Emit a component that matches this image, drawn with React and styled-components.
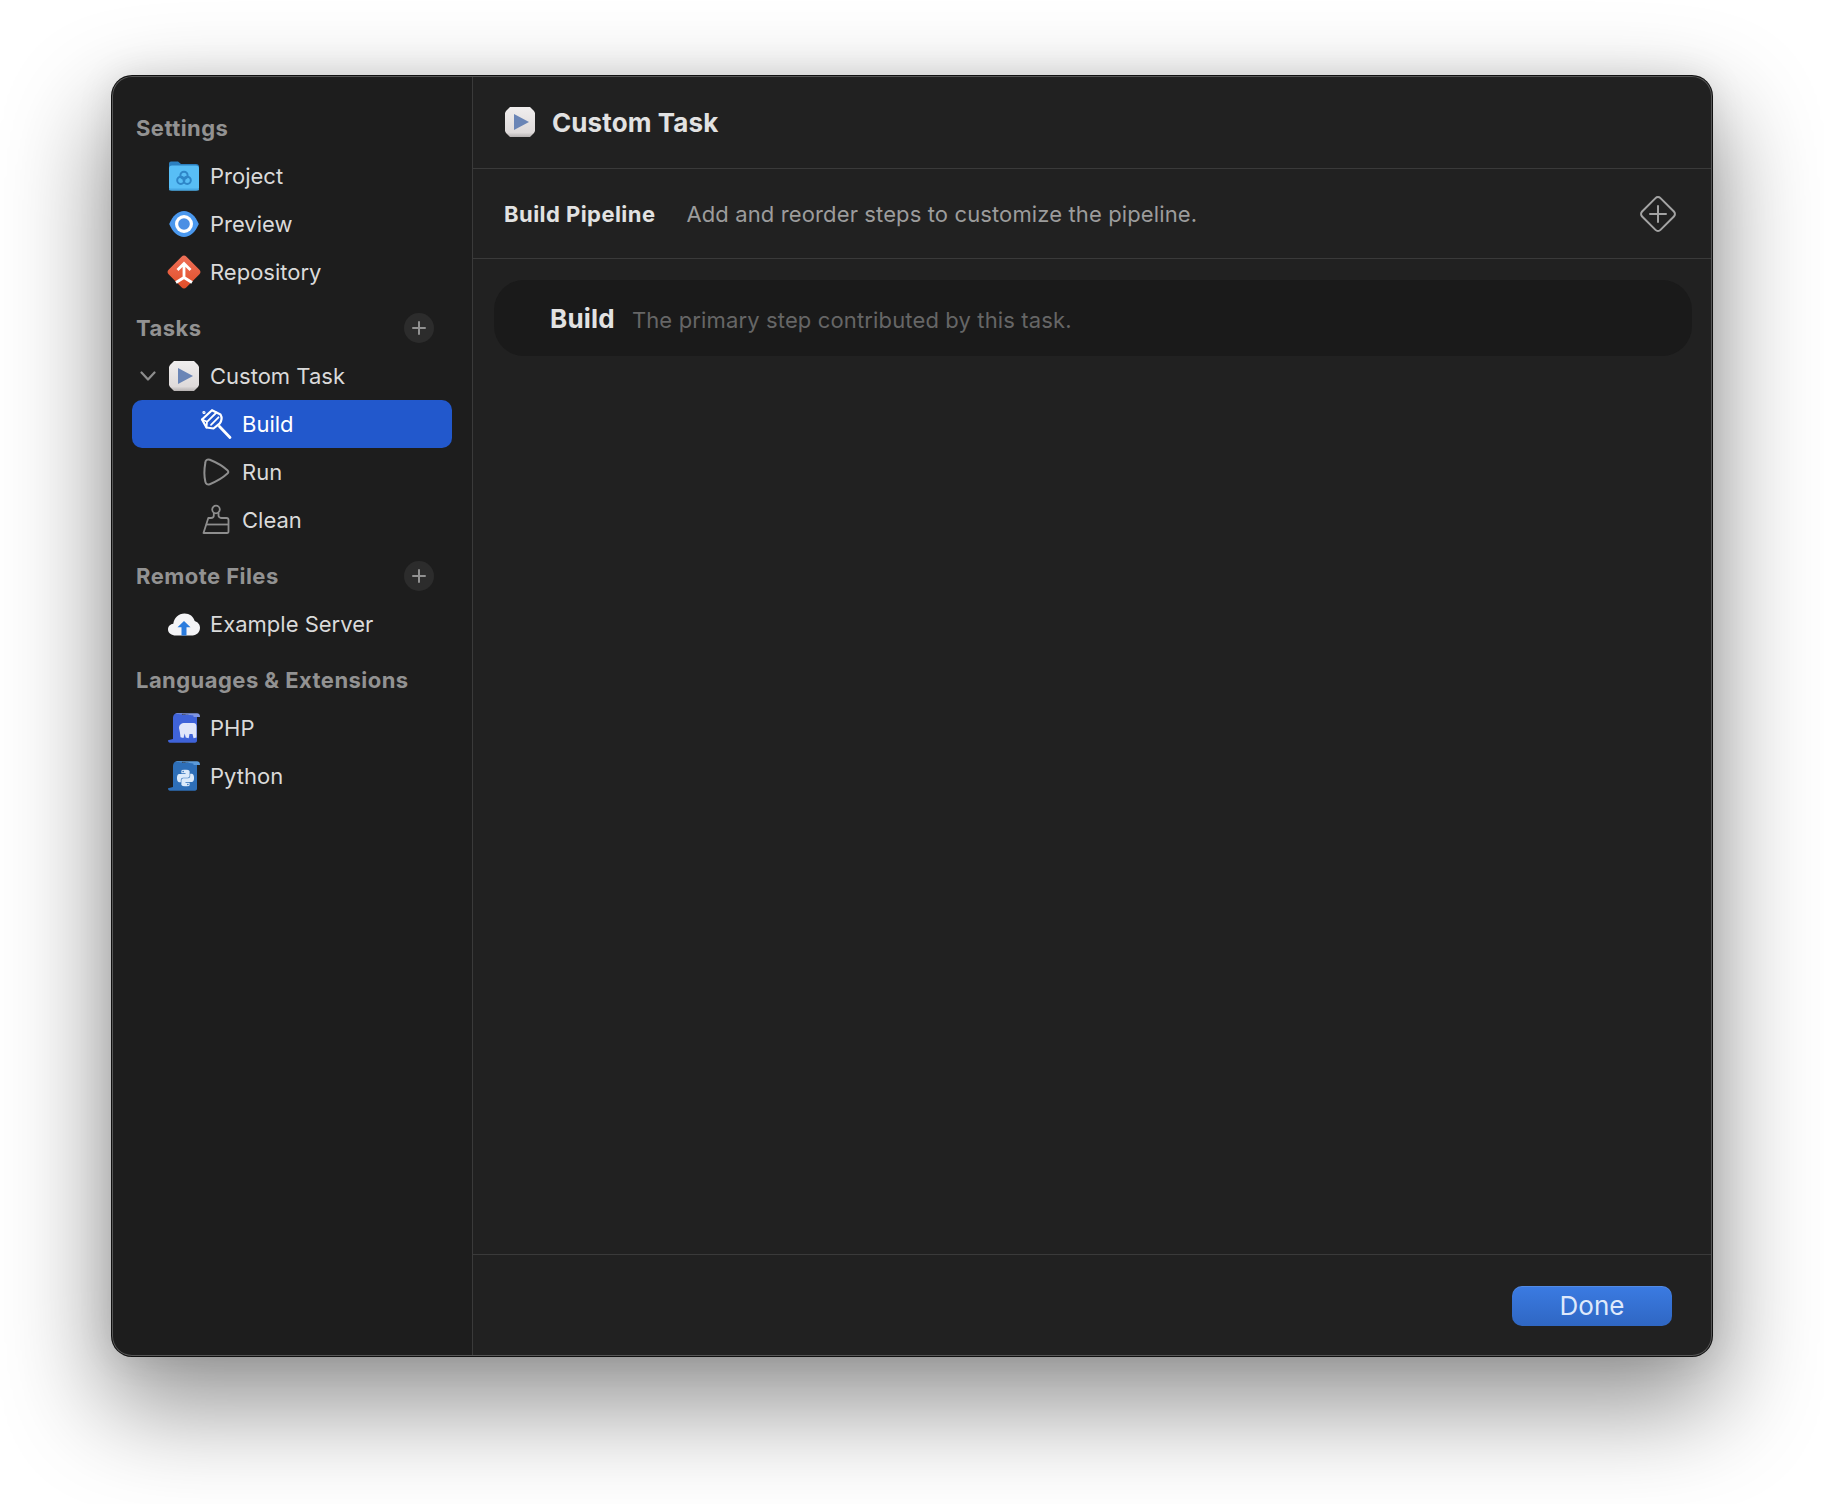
import React from "react";
import styled, { createGlobalStyle } from "styled-components";
import { SiPython } from "react-icons/si";

const Global = createGlobalStyle`
  html, body { margin: 0; padding: 0; background: #ffffff; }
  body { font-family: Inter, "Liberation Sans", sans-serif; -webkit-font-smoothing: antialiased; }
  #root { width: 1824px; height: 1504px; overflow: hidden; }
`;

const Stage = styled.div`
  width: 1824px;
  height: 1504px;
  padding: 76px 112px 148px;
  box-sizing: border-box;
`;
const Window = styled.div`
  width: 1600px;
  height: 1280px;
  display: flex;
  border-radius: 20px;
  overflow: hidden;
  background: #212121;
  box-shadow: 0 0 0 1px #111, 0 44px 100px 8px rgba(0, 0, 0, 0.42), 0 0 36px rgba(0, 0, 0, 0.1);
  position: relative;
  &::after {
    content: "";
    position: absolute;
    inset: 0;
    border-radius: 20px;
    box-shadow: inset 0 0 0 1px #565656;
    pointer-events: none;
  }
`;
const Sidebar = styled.aside`
  width: 361px;
  flex-shrink: 0;
  box-sizing: border-box;
  padding: 28px 20px 0;
  background: #1d1d1d;
  border-right: 1px solid #3a3a3a;
  display: flex;
  flex-direction: column;
  gap: 8px;
`;
const Section = styled.section`
  display: flex;
  flex-direction: column;
`;
const SectionHead = styled.div`
  height: 48px;
  display: flex;
  align-items: center;
  justify-content: space-between;
  padding: 0 18px 0 4px;
  font-size: 22px;
  font-weight: 700;
  color: #929292;
  letter-spacing: 0.45px;
`;
const AddCircle = styled.span`
  width: 30px;
  height: 30px;
  border-radius: 50%;
  background: #2c2c2c;
  color: #919191;
  display: flex;
  align-items: center;
  justify-content: center;
`;
const Row = styled.div`
  height: 48px;
  display: flex;
  align-items: center;
  gap: 11px;
  border-radius: 10px;
  padding-left: ${(p) => (p.$nested ? 69 : 37)}px;
  background: ${(p) => (p.$selected ? "#2258cc" : "transparent")};
  color: ${(p) => (p.$selected ? "#ffffff" : "#dadada")};
  font-size: 22px;
  font-weight: 400;
  position: relative;
`;
const Chevron = styled.svg`
  position: absolute;
  left: 8px;
  top: 18px;
  width: 16px;
  height: 12px;
`;
const IconSvg = styled.svg`
  width: 30px;
  height: 30px;
  flex-shrink: 0;
  overflow: visible;
`;
const Main = styled.main`
  flex: 1;
  min-width: 0;
  display: flex;
  flex-direction: column;
  background: #212121;
`;
const Header = styled.header`
  height: 93px;
  box-sizing: border-box;
  display: flex;
  align-items: center;
  gap: 17px;
  padding: 0 32px;
  border-bottom: 1px solid #3a3a3a;
`;
const Title = styled.h1`
  margin: 0;
  font-size: 26px;
  font-weight: 700;
  color: #e2e2e2;
  letter-spacing: 0.1px;
`;
const PipelineBar = styled.div`
  height: 90px;
  box-sizing: border-box;
  display: flex;
  align-items: center;
  padding: 0 34px 0 31px;
  border-bottom: 1px solid #3a3a3a;
`;
const PipelineTitle = styled.span`
  font-size: 22px;
  font-weight: 700;
  color: #e2e2e2;
  letter-spacing: 0.45px;
`;
const PipelineDesc = styled.span`
  margin-left: 31px;
  font-size: 22px;
  color: #9c9c9c;
  letter-spacing: 0.12px;
  flex: 1;
`;
const StepList = styled.div`
  flex: 1;
  padding: 21px 20px 0 21px;
`;
const StepCard = styled.div`
  height: 76px;
  display: flex;
  align-items: center;
  gap: 17px;
  padding-left: 56px;
  border-radius: 30px;
  background: #1a1a1a;
`;
const StepName = styled.span`
  font-size: 26px;
  font-weight: 700;
  color: #e2e2e2;
  letter-spacing: 0.2px;
`;
const StepDesc = styled.span`
  margin-top: 3px;
  font-size: 22px;
  color: #666666;
  letter-spacing: 0.14px;
`;
const Footer = styled.footer`
  height: 102px;
  box-sizing: border-box;
  border-top: 1px solid #3a3a3a;
  display: flex;
  align-items: center;
  justify-content: flex-end;
  padding-right: 40px;
`;
const DoneButton = styled.button`
  width: 160px;
  height: 40px;
  border: 0;
  border-radius: 10px;
  background: linear-gradient(#3b7be2, #2f67c3);
  box-shadow: inset 0 1px 0 rgba(255, 255, 255, 0.12);
  color: #dfe9fb;
  font: 400 26px Inter, "Liberation Sans", sans-serif;
  padding: 0;
`;

const Plus = () => (
  <svg width="14" height="14" viewBox="0 0 14 14">
    <path d="M7 1v12M1 7h12" stroke="currentColor" strokeWidth="2" strokeLinecap="round" />
  </svg>
);

const FolderIcon = () => (
  <IconSvg viewBox="0 0 30 30">
    <path d="M0 5V2.500A2 2 0 0 1 2 .5h7l3 2.500h15a3 3 0 0 1 3 3V9H0z" fill="#2b7fbf" />
    <rect x="0" y="4.500" width="30" height="25" rx="3" fill="#58bef6" />
    <rect x="0" y="27.500" width="30" height="2.100" rx="1" fill="#47a8e4" />
    <g fill="none" stroke="#2e86c8" strokeWidth="2">
      <circle cx="15" cy="14.300" r="3.600" />
      <circle cx="11.800" cy="19.300" r="3.600" />
      <circle cx="18.200" cy="19.300" r="3.600" />
    </g>
  </IconSvg>
);
const EyeIcon = () => (
  <IconSvg viewBox="0 0 30 30">
    <path d="M.2 15C3.500 7 9 2 15 2s11.500 5 14.800 13C26.500 23 21 28 15 28S3.500 23 .2 15z" fill="#4a98ee" />
    <circle cx="15" cy="15" r="9" fill="#fff" />
    <circle cx="15" cy="15" r="5.800" fill="#4a8fe4" />
  </IconSvg>
);
const RepoIcon = () => (
  <IconSvg viewBox="0 0 30 30">
    <defs>
      <linearGradient id="repoG" x1="0" y1="0" x2="0" y2="1">
        <stop offset="0" stopColor="#ee7058" />
        <stop offset="1" stopColor="#e24e28" />
      </linearGradient>
    </defs>
    <path d="M12.500-.2a3.500 3.500 0 0 1 5 0L30.200 12.500a3.500 3.500 0 0 1 0 5L17.500 30.200a3.500 3.500 0 0 1-5 0L-.2 17.500a3.500 3.500 0 0 1 0-5z" fill="url(#repoG)" />
    <path d="M15 6.500V21M8.500 13 15 6.500l6.500 6.500M7 25.500 15 20.500l8 5" fill="none" stroke="#fff" strokeWidth="2.800" />
  </IconSvg>
);
const TaskIcon = ({ id }) => (
  <IconSvg viewBox="0 0 30 30">
    <defs>
      <linearGradient id={id} x1="0" y1="0" x2="0" y2="1">
        <stop offset="0" stopColor="#f0eeee" />
        <stop offset="0.85" stopColor="#dedada" />
        <stop offset="1" stopColor="#b5b1b1" />
      </linearGradient>
    </defs>
    <path d="M5 0h20l1 1 3 3 1 2v18l-1 2-3 3-1 1H5l-1-1-3-3-1-2V6l1-2 3-3z" fill={`url(#${id})`} />
    <path d="M9 7v16l15-8z" fill="#6a85b6" />
  </IconSvg>
);
const HammerIcon = () => (
  <IconSvg viewBox="0 0 30 30" fill="none" stroke="#fff" strokeWidth="2.200" strokeLinejoin="round" strokeLinecap="round">
    <path d="M1 10.500 11 1.200l8.500 4.300c1.700 3 1.200 6.200-.7 8.800L12.500 19.500 5.500 18.500z" />
    <path d="M1 10.500l5 2.300-.5 5.700M6 12.800 15.500 3.500M10 15.800l7.500-7.500" strokeWidth="1.800" />
    <path d="M18.500 17.500 29 28.500" strokeWidth="2.800" />
    <circle cx="3" cy="3.500" r="1" strokeWidth="1.200" />
  </IconSvg>
);
const RunIcon = () => (
  <IconSvg viewBox="0 0 30 30">
    <path d="M4.300 6C4.300 3.200 6.300 1.800 8.800 2.800 15 5.300 22.500 9.700 26.400 13.300c1.200 1.100 1.200 2.200 0 3.300C22.500 20.300 15 24.700 8.800 27.200c-2.300.9-4-.2-4.400-2.300C3 19 3.200 12 4.300 6z" fill="none" stroke="#8e8e8e" strokeWidth="2" />
  </IconSvg>
);
const CleanIcon = () => (
  <IconSvg viewBox="0 0 30 30" fill="none" stroke="#8e8e8e" strokeWidth="1.800" strokeLinejoin="round">
    <circle cx="15" cy="4.500" r="3.800" />
    <path d="M12.800 8v2.500c0 1.500-1.500 2.500-3 2.500H7.300L2.500 28H26c1.200 0 1.500-.8 1.500-1.800V15c0-1.200-.8-2-2-2h-4.800c-1.500 0-3.200-1-3.200-2.500V8" />
    <path d="M5.500 19.500h22" />
  </IconSvg>
);
const CloudIcon = () => (
  <IconSvg viewBox="0 0 30 30">
    <path d="M7 26.500C2.500 26.500-1 24 -1 20.500c0-3.200 2.300-5.300 5.300-5.700C5 9 9.500 4.500 15.500 4.500c5.200 0 9 3 10.200 7.500 2.800.8 5.300 3.300 5.300 6.800 0 4.200-3.200 7.700-7.500 7.700z" fill="#f4f4f6" />
    <path d="M15 12 8.500 18.200h4V26.500h5V18.200h4z" fill="#2a7bdd" />
  </IconSvg>
);
const ScrollBase = ({ body, top, children }) => (
  <IconSvg viewBox="0 0 30 30">
    <path d="M-1 27.300 4 26V5.500C4 2 5.500.3 9 .3h4V2h15v25.500c0 1.300-.7 2.200-2 2.200H1c-1.300 0-2-1-2-2.400z" fill={body} />
    <path d="M6 .3h22c2 0 3 1.200 3 3.700H24.500V2.800C24 1.800 8 1.800 6 .3z" fill={top} />
    {children}
  </IconSvg>
);
const PhpIcon = () => (
  <ScrollBase body="#3f63d9" top="#7f95e2">
    <path d="M10 15c0-3 2-5 6-5h8.500c2.200 0 3 1.500 3 4v10.500l-3 .8-1-4.300h-3l-.8 4.300-3-.8-1-4-1.200 4.500-3-.7-.6-5z" fill="#e0e6fa" />
  </ScrollBase>
);
const PythonIcon = () => (
  <ScrollBase body="#2e6fb8" top="#5b9ad9">
    <SiPython x="8" y="8.500" size="17" color="#dcebfb" />
  </ScrollBase>
);
const DiamondPlus = () => (
  <svg width="40" height="40" viewBox="0 0 40 40" fill="none" stroke="#a3a3a3" strokeLinecap="round">
    <rect x="7" y="7" width="26" height="26" rx="3.500" transform="rotate(45 20 20)" strokeWidth="2" />
    <path d="M20 12v16M12 20h16" strokeWidth="2" />
  </svg>
);

export default function App() {
  return (
    <Stage>
      <Global />
      <Window>
        <Sidebar>
          <Section>
            <SectionHead>Settings</SectionHead>
            <Row><FolderIcon />Project</Row>
            <Row><EyeIcon />Preview</Row>
            <Row><RepoIcon />Repository</Row>
          </Section>
          <Section>
            <SectionHead>Tasks<AddCircle><Plus /></AddCircle></SectionHead>
            <Row>
              <Chevron viewBox="0 0 16 12"><path d="M1.500 2.500 8 9.500l6.500-7" fill="none" stroke="#8e8e8e" strokeWidth="2.200" strokeLinecap="round" strokeLinejoin="round" /></Chevron>
              <TaskIcon id="taskA" />Custom Task
            </Row>
            <Row $nested $selected><HammerIcon />Build</Row>
            <Row $nested><RunIcon />Run</Row>
            <Row $nested><CleanIcon />Clean</Row>
          </Section>
          <Section>
            <SectionHead>Remote Files<AddCircle><Plus /></AddCircle></SectionHead>
            <Row><CloudIcon />Example Server</Row>
          </Section>
          <Section>
            <SectionHead>Languages &amp; Extensions</SectionHead>
            <Row><PhpIcon />PHP</Row>
            <Row><PythonIcon />Python</Row>
          </Section>
        </Sidebar>
        <Main>
          <Header>
            <TaskIcon id="taskB" />
            <Title>Custom Task</Title>
          </Header>
          <PipelineBar>
            <PipelineTitle>Build Pipeline</PipelineTitle>
            <PipelineDesc>Add and reorder steps to customize the pipeline.</PipelineDesc>
            <DiamondPlus />
          </PipelineBar>
          <StepList>
            <StepCard>
              <StepName>Build</StepName>
              <StepDesc>The primary step contributed by this task.</StepDesc>
            </StepCard>
          </StepList>
          <Footer>
            <DoneButton>Done</DoneButton>
          </Footer>
        </Main>
      </Window>
    </Stage>
  );
}
